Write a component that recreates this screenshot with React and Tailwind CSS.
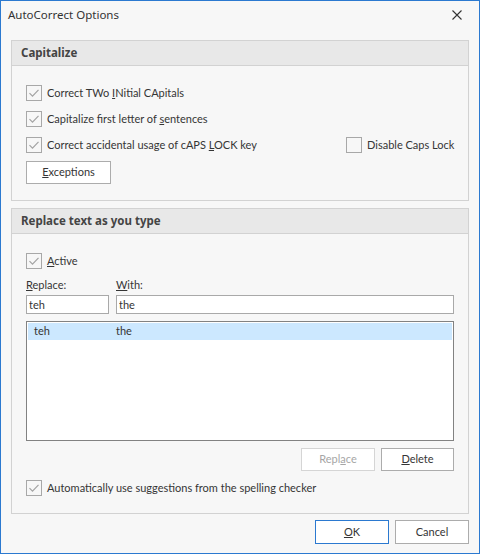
import { useState } from "react";

/* small helpers for the dialog controls */
function Check({ checked }) {
  return (
    <span className="w-[16px] h-[16px] border border-[#a8a8a8] bg-[#f7f7f7] flex items-center justify-center shrink-0">
      {checked && (
        <svg width="12" height="12" viewBox="0 0 12 12">
          <path d="M1.5 6.2 L4.5 9.2 L10.5 2.8" fill="none" stroke="#a3a3a3" strokeWidth="1.2" />
        </svg>
      )}
    </span>
  );
}

function CheckRow({ checked, children }) {
  return (
    <label className="flex items-center gap-[5px] h-[16px] whitespace-nowrap">
      <Check checked={checked} />
      <span className="leading-none -mt-[1px]">{children}</span>
    </label>
  );
}

function Btn({ children, className = "", disabled, primary }) {
  return (
    <button
      className={
        "h-[23px] bg-white border flex items-center justify-center " +
        (primary
          ? "border-[#2b79d0] "
          : disabled
          ? "border-[#d5d5d5] text-[#a6a6a6] "
          : "border-[#acacac] ") +
        className
      }
    >
      {children}
    </button>
  );
}

function Group({ title, children, className = "" }) {
  return (
    <div className={"border border-[#d2d2d2] flex flex-col " + className}>
      <div
        className="h-[25px] bg-[#e8e8e8] border-b border-[#d2d2d2] flex items-center pl-[9px] font-bold text-[11.5px] text-[#444]"
        style={{ fontFamily: '"Noto Sans", sans-serif' }}
      >
        {title}
      </div>
      <div className="flex-1 px-[14px]">{children}</div>
    </div>
  );
}

export default function App() {
  const [replace, setReplace] = useState("teh");
  const [withText, setWithText] = useState("the");

  return (
    <div
      className="w-[480px] h-[554px] border border-[#2b79d0] bg-[#f7f7f7] flex flex-col text-[11px] text-[#353535]"
      style={{ fontFamily: 'Lato, "Noto Sans", sans-serif' }}
    >
      {/* title bar */}
      <div className="h-[29px] flex items-center justify-between pl-[7px] pr-[17px] pb-[2px] text-[#333]">
        <span className="text-[11.5px]" style={{ fontFamily: '"Noto Sans", sans-serif' }}>
          AutoCorrect Options
        </span>
        <svg width="10" height="10" viewBox="0 0 10 10">
          <path d="M0.5 0.5 L9.5 9.5 M9.5 0.5 L0.5 9.5" stroke="#333" strokeWidth="1.1" />
        </svg>
      </div>

      <div className="flex-1 flex flex-col px-[10px] pt-[10px]">
        {/* Capitalize */}
        <Group title="Capitalize" className="h-[161px]">
          <div className="pt-[19px] flex flex-col gap-[10px]">
            <CheckRow checked>
              Correct TWo <u>I</u>Nitial CApitals
            </CheckRow>
            <CheckRow checked>
              Capitalize first letter of <u>s</u>entences
            </CheckRow>
            <div className="flex items-center">
              <div className="flex-1">
                <CheckRow checked>
                  Correct accidental usage of cAPS <u>L</u>OCK key
                </CheckRow>
              </div>
              <div className="w-[108px]">
                <CheckRow>Disable Caps Lock</CheckRow>
              </div>
            </div>
          </div>
          <Btn className="w-[85px] mt-[8px]">
            <span>
              <u>E</u>xceptions
            </span>
          </Btn>
        </Group>

        {/* Replace text as you type */}
        <Group title="Replace text as you type" className="h-[306px] mt-[7px]">
          <div className="pt-[19px]">
            <CheckRow checked>
              <u>A</u>ctive
            </CheckRow>
          </div>
          <div className="flex gap-[7px] mt-[8px]">
            <div className="w-[83px] flex flex-col">
              <span className="h-[18px]">
                <u>R</u>eplace:
              </span>
              <input
                value={replace}
                onChange={(e) => setReplace(e.target.value)}
                className="h-[19px] border border-[#a9a9a9] bg-white px-[2px] outline-none"
              />
            </div>
            <div className="flex-1 flex flex-col">
              <span className="h-[18px]">
                <u>W</u>ith:
              </span>
              <input
                value={withText}
                onChange={(e) => setWithText(e.target.value)}
                className="h-[19px] border border-[#a9a9a9] bg-white px-[2px] outline-none"
              />
            </div>
          </div>
          <div className="mt-[7px] h-[120px] border border-[#828282] bg-white p-[1px]">
            <div className="h-[17px] bg-[#cce8ff] flex items-center">
              <span className="w-[88px] pl-[6px]">teh</span>
              <span>the</span>
            </div>
          </div>
          <div className="flex justify-end gap-[6px] mt-[7px]">
            <Btn disabled className="w-[74px]">
              <span>
                Repl<u>a</u>ce
              </span>
            </Btn>
            <Btn className="w-[73px]">
              <span>
                <u>D</u>elete
              </span>
            </Btn>
          </div>
          <div className="mt-[9px]">
            <CheckRow checked>Automatically use suggestions from the spelling checker</CheckRow>
          </div>
        </Group>

        {/* dialog buttons */}
        <div className="flex justify-end gap-[6px] mt-[6px]">
          <Btn primary className="w-[74px] h-[24px]">
            <span>
              <u>O</u>K
            </span>
          </Btn>
          <Btn className="w-[74px] h-[24px]">Cancel</Btn>
        </div>
      </div>
    </div>
  );
}
